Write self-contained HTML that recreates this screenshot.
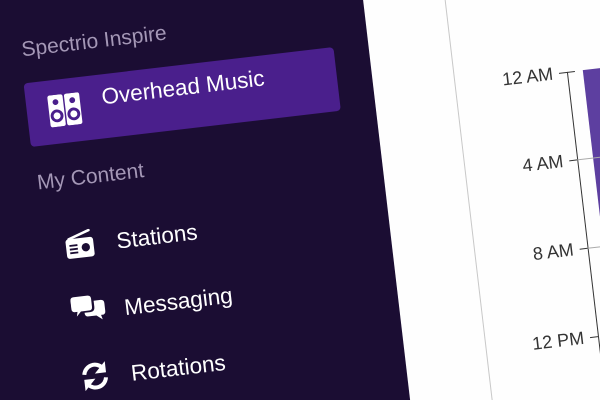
<!DOCTYPE html>
<html><head><meta charset="utf-8"><style>
html,body{margin:0;padding:0;width:600px;height:400px;overflow:hidden;background:#1b0d33;}
#wrap{position:relative;width:600px;height:400px;overflow:hidden;}
#rot{position:absolute;left:0;top:0;width:600px;height:400px;transform:rotate(-6.7deg);transform-origin:300px 200px;font-family:"Liberation Sans",sans-serif;}
.side{position:absolute;left:-300px;top:-300px;width:686px;height:1000px;background:#1b0d33;}
.main{position:absolute;left:386px;top:-300px;width:600px;height:1000px;background:#fefefe;}
.vline{position:absolute;left:467px;top:-300px;width:1px;height:1000px;background:#c8c8c8;}
.t{position:absolute;white-space:nowrap;line-height:1;}
.gray{color:#a497b6;font-size:21px;}
.w{color:#fff;font-size:22.5px;}
.btn{position:absolute;left:39px;top:52px;width:312px;height:64px;background:#4a1f8c;border-radius:4px;}
.lbl{position:absolute;color:#333;font-size:18px;text-align:right;width:90px;}
.tick{position:absolute;height:1px;background:#333;width:8px;left:572px;}
svg{position:absolute;}
</style></head><body>
<div id="wrap">
<div id="rot">
<div class="side"></div>
<div class="main"></div>
<div class="vline"></div>
<div class="t gray" style="left:41px;top:8px;">Spectrio Inspire</div>
<div class="btn"></div>
<svg style="left:60px;top:67px" width="34" height="32" viewBox="0 0 22 22">
<rect x="0" y="0" width="10.5" height="22" rx="1.5" fill="#fff"/><rect x="11.5" y="0" width="10.5" height="22" rx="1.5" fill="#fff"/>
<circle cx="5.2" cy="5" r="2" fill="#4a1f8c"/><circle cx="5.2" cy="14.5" r="3.4" fill="none" stroke="#4a1f8c" stroke-width="2"/>
<circle cx="16.8" cy="5" r="2" fill="#4a1f8c"/><circle cx="16.8" cy="14.5" r="3.4" fill="none" stroke="#4a1f8c" stroke-width="2"/>
</svg>
<div class="t w" style="left:115px;top:64px;">Overhead Music</div>
<div class="t gray" style="left:41px;top:142px;">My Content</div>
<svg style="left:60px;top:204px" width="32" height="30" viewBox="0 0 26 26">
<path d="M4 7 L22 1" stroke="#fff" stroke-width="2.2" stroke-linecap="round"/>
<rect x="1" y="7" width="24" height="17" rx="2.5" fill="#fff"/>
<rect x="4" y="12" width="7" height="1.6" fill="#1b0d33"/><rect x="4" y="15.2" width="7" height="1.6" fill="#1b0d33"/><rect x="4" y="18.4" width="7" height="1.6" fill="#1b0d33"/>
<circle cx="18" cy="15.5" r="3.6" fill="#1b0d33"/>
</svg>
<div class="t w" style="left:113px;top:209px;">Stations</div>
<svg style="left:60px;top:269px" width="35" height="30" viewBox="0 0 30 26">
<path d="M3 1 H15 Q18 1 18 4 V11 Q18 14 15 14 H8 L4 18 L5 14 H3 Q0 14 0 11 V4 Q0 1 3 1Z" fill="#fff"/>
<path d="M20 6 H26 Q29 6 29 9 V16 Q29 19 26 19 H25 L26 23 L21 19 H14 Q11 19 11 16 V15.5 H16 Q20 15.5 20 11.5Z" fill="#fff"/>
</svg>
<div class="t w" style="left:113px;top:276px;">Messaging</div>
<svg style="left:61px;top:336px" width="30" height="30" viewBox="0 0 24 24">
<path d="M3.5 10 A8.5 8.5 0 0 1 18.5 6" stroke="#fff" stroke-width="3.2" fill="none"/>
<path d="M21 1 V10 H12Z" fill="#fff"/>
<path d="M20.5 14 A8.5 8.5 0 0 1 5.5 18" stroke="#fff" stroke-width="3.2" fill="none"/>
<path d="M3 23 V14 H12Z" fill="#fff"/>
</svg>
<div class="t w" style="left:112px;top:342px;">Rotations</div>
<div style="position:absolute;left:580px;top:104px;width:1px;height:600px;background:#333;"></div>
<div style="position:absolute;left:596px;top:104px;width:300px;height:600px;background:#5d3fa0;"></div>
<div class="tick" style="top:104px;width:16px;"></div>
<div class="tick" style="top:192px;width:30px;background:#aaa;left:580px"></div><div class="tick" style="top:192px;"></div>
<div class="tick" style="top:281px;width:30px;background:#aaa;left:580px"></div><div class="tick" style="top:281px;"></div>
<div class="tick" style="top:370px;"></div>
<div class="t lbl" style="left:476px;top:95px;">12 AM</div>
<div class="t lbl" style="left:476px;top:183px;">4 AM</div>
<div class="t lbl" style="left:476px;top:272px;">8 AM</div>
<div class="t lbl" style="left:476px;top:361px;">12 PM</div>
</div>
</div>
</body></html>
